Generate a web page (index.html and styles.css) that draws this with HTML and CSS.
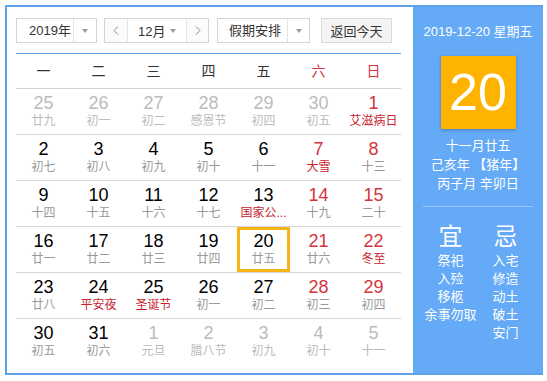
FILE: index.html
```html
<!DOCTYPE html>
<html lang="zh-CN">

<head>
    <meta charset="UTF-8">
    <meta name="viewport" content="width=device-width, initial-scale=1.0">
    <title>万年历</title>
    <link rel="stylesheet" href="styles.css">
</head>

<body>
    <div class="calendar">
        <div class="main">
            <div class="toolbar">
                <div class="select year">
                    <span class="value">2019年</span>
                    <span class="caret-box"><i class="caret"></i></span>
                </div>
                <div class="month-picker">
                    <button class="nav prev">
                        <svg width="6" height="9" viewBox="0 0 6 9"><path d="M5 0.5 L1 4.5 L5 8.5" fill="none" stroke="#888" stroke-width="1"/></svg>
                    </button>
                    <div class="month">
                        <span>12月</span>
                        <i class="caret"></i>
                    </div>
                    <button class="nav next">
                        <svg width="6" height="9" viewBox="0 0 6 9"><path d="M1 0.5 L5 4.5 L1 8.5" fill="none" stroke="#888" stroke-width="1"/></svg>
                    </button>
                </div>
                <div class="select holiday">
                    <span class="value">假期安排</span>
                    <span class="caret-box"><i class="caret"></i></span>
                </div>
                <button class="today-btn">返回今天</button>
            </div>

            <div class="weekdays">
                <div>一</div>
                <div>二</div>
                <div>三</div>
                <div>四</div>
                <div>五</div>
                <div class="weekend">六</div>
                <div class="weekend">日</div>
            </div>

            <div class="weeks">
                <div class="week">
                    <div class="day other"><span class="num">25</span><span class="lunar">廿九</span></div>
                    <div class="day other"><span class="num">26</span><span class="lunar">初一</span></div>
                    <div class="day other"><span class="num">27</span><span class="lunar">初二</span></div>
                    <div class="day other"><span class="num">28</span><span class="lunar">感恩节</span></div>
                    <div class="day other"><span class="num">29</span><span class="lunar">初四</span></div>
                    <div class="day other"><span class="num">30</span><span class="lunar">初五</span></div>
                    <div class="day weekend"><span class="num">1</span><span class="lunar fest">艾滋病日</span></div>
                </div>
                <div class="week">
                    <div class="day"><span class="num">2</span><span class="lunar">初七</span></div>
                    <div class="day"><span class="num">3</span><span class="lunar">初八</span></div>
                    <div class="day"><span class="num">4</span><span class="lunar">初九</span></div>
                    <div class="day"><span class="num">5</span><span class="lunar">初十</span></div>
                    <div class="day"><span class="num">6</span><span class="lunar">十一</span></div>
                    <div class="day weekend"><span class="num">7</span><span class="lunar fest">大雪</span></div>
                    <div class="day weekend"><span class="num">8</span><span class="lunar">十三</span></div>
                </div>
                <div class="week">
                    <div class="day"><span class="num">9</span><span class="lunar">十四</span></div>
                    <div class="day"><span class="num">10</span><span class="lunar">十五</span></div>
                    <div class="day"><span class="num">11</span><span class="lunar">十六</span></div>
                    <div class="day"><span class="num">12</span><span class="lunar">十七</span></div>
                    <div class="day"><span class="num">13</span><span class="lunar fest">国家公...</span></div>
                    <div class="day weekend"><span class="num">14</span><span class="lunar">十九</span></div>
                    <div class="day weekend"><span class="num">15</span><span class="lunar">二十</span></div>
                </div>
                <div class="week">
                    <div class="day"><span class="num">16</span><span class="lunar">廿一</span></div>
                    <div class="day"><span class="num">17</span><span class="lunar">廿二</span></div>
                    <div class="day"><span class="num">18</span><span class="lunar">廿三</span></div>
                    <div class="day"><span class="num">19</span><span class="lunar">廿四</span></div>
                    <div class="day today"><span class="num">20</span><span class="lunar">廿五</span></div>
                    <div class="day weekend"><span class="num">21</span><span class="lunar">廿六</span></div>
                    <div class="day weekend"><span class="num">22</span><span class="lunar fest">冬至</span></div>
                </div>
                <div class="week">
                    <div class="day"><span class="num">23</span><span class="lunar">廿八</span></div>
                    <div class="day"><span class="num">24</span><span class="lunar fest">平安夜</span></div>
                    <div class="day"><span class="num">25</span><span class="lunar fest">圣诞节</span></div>
                    <div class="day"><span class="num">26</span><span class="lunar">初一</span></div>
                    <div class="day"><span class="num">27</span><span class="lunar">初二</span></div>
                    <div class="day weekend"><span class="num">28</span><span class="lunar">初三</span></div>
                    <div class="day weekend"><span class="num">29</span><span class="lunar">初四</span></div>
                </div>
                <div class="week">
                    <div class="day"><span class="num">30</span><span class="lunar">初五</span></div>
                    <div class="day"><span class="num">31</span><span class="lunar">初六</span></div>
                    <div class="day other"><span class="num">1</span><span class="lunar">元旦</span></div>
                    <div class="day other"><span class="num">2</span><span class="lunar">腊八节</span></div>
                    <div class="day other"><span class="num">3</span><span class="lunar">初九</span></div>
                    <div class="day other"><span class="num">4</span><span class="lunar">初十</span></div>
                    <div class="day other"><span class="num">5</span><span class="lunar">十一</span></div>
                </div>
            </div>
        </div>

        <aside class="info">
            <div class="info-date">2019-12-20 星期五</div>
            <div class="big-day">20</div>
            <div class="lunar-info">
                <div>十一月廿五</div>
                <div>己亥年 【猪年】</div>
                <div>丙子月 辛卯日</div>
            </div>
            <div class="divider"></div>
            <div class="almanac">
                <div class="col">
                    <h3>宜</h3>
                    <ul>
                        <li>祭祀</li>
                        <li>入殓</li>
                        <li>移柩</li>
                        <li>余事勿取</li>
                    </ul>
                </div>
                <div class="col">
                    <h3>忌</h3>
                    <ul>
                        <li>入宅</li>
                        <li>修造</li>
                        <li>动土</li>
                        <li>破土</li>
                        <li>安门</li>
                    </ul>
                </div>
            </div>
        </aside>
    </div>
</body>

</html>
```

FILE: styles.css
```css
* {
    box-sizing: border-box;
    margin: 0;
    padding: 0;
}

body {
    font-family: "Liberation Sans", "Noto Sans CJK SC", sans-serif;
    color: #333;
    background: #fff;
}

.calendar {
    display: flex;
    width: 538px;
    height: 370px;
    margin: 5px 0 0 5px;
    border: 2px solid #5ca3ec;
}

.main {
    width: 406px;
    padding: 11px 12px 0 9px;
    background: #fff;
}

/* toolbar */
.toolbar {
    display: flex;
    align-items: center;
    height: 25px;
    font-size: 13px;
}

.select {
    display: flex;
    height: 25px;
    border: 1px solid #d4d4d4;
    background: #fff;
}

.select .value {
    padding-left: 12px;
    line-height: 23px;
}

.year {
    width: 81px;
}

.year .value {
    width: 56px;
}

.holiday {
    width: 93px;
    margin-left: 8px;
}

.holiday .value {
    width: 69px;
    padding-left: 11px;
}

.caret-box {
    flex: 1;
    display: flex;
    align-items: center;
    justify-content: center;
    border-left: 1px solid #e4e4e4;
}

.caret {
    display: inline-block;
    width: 0;
    height: 0;
    border-top: 4px solid #9a9a9a;
    border-left: 3.5px solid transparent;
    border-right: 3.5px solid transparent;
}

.month-picker {
    display: flex;
    width: 105px;
    height: 25px;
    margin-left: 7px;
    border: 1px solid #d4d4d4;
}

.nav {
    display: flex;
    align-items: center;
    justify-content: center;
    width: 23px;
    border: none;
    background: #fbfbfb;
}

.prev {
    border-right: 1px solid #e4e4e4;
}

.next {
    width: 21px;
}

.month {
    display: flex;
    align-items: center;
    width: 59px;
    padding-left: 10px;
    border-right: 1px solid #e4e4e4;
}

.month .caret {
    margin-left: 5px;
}

.today-btn {
    width: 71px;
    height: 25px;
    margin-left: 11px;
    border: 1px solid #dadada;
    background: #f4f4f4;
    color: #333;
    font-family: inherit;
    font-size: 13px;
}

/* grid */
.weekdays {
    display: grid;
    grid-template-columns: repeat(7, 55px);
    margin-top: 10px;
    border-top: 1px solid #5ca3ec;
    border-bottom: 1px solid #d2d2d2;
    line-height: 34px;
    font-size: 14px;
    text-align: center;
    color: #333;
}

.weekdays .weekend {
    color: #d4343e;
}

.week {
    display: grid;
    grid-template-columns: repeat(7, 55px);
    height: 46px;
    border-bottom: 1px solid #d6d6d6;
}

.week:last-child {
    border-bottom: none;
}

.day {
    display: flex;
    flex-direction: column;
    align-items: center;
    padding-top: 4px;
}

.num {
    font-size: 18px;
    line-height: 20px;
    color: #000;
}

.lunar {
    font-size: 12px;
    line-height: 16px;
    color: #999;
    white-space: nowrap;
}

.day.weekend .num {
    color: #d4343e;
}

.lunar.fest {
    color: #c8232f;
}

.day.other .num,
.day.other .lunar {
    color: #bbb;
}

.day.today {
    margin: 0 1px;
    box-shadow: inset 0 0 0 3px #f7b418;
}

/* side panel */
.info {
    width: 130px;
    padding: 15px 10px 0;
    background: #64aaf6;
    color: #fff;
    text-align: center;
}

.info-date {
    font-size: 13px;
    line-height: 20px;
}

.big-day {
    width: 75px;
    height: 73px;
    margin: 14px auto 0;
    background: #fdb300;
    font-size: 52px;
    line-height: 73px;
    box-shadow: 0 1px 3px rgba(0, 0, 0, 0.25);
}

.lunar-info {
    margin-top: 7px;
    font-size: 13px;
    line-height: 19px;
}

.divider {
    margin-top: 13px;
    border-top: 1px solid rgba(255, 255, 255, 0.35);
}

.almanac {
    display: grid;
    grid-template-columns: 55px 55px;
    margin-top: 15px;
}

.col h3 {
    font-size: 24px;
    font-weight: normal;
    line-height: 30px;
}

.col ul {
    list-style: none;
    font-size: 13px;
    line-height: 18px;
}
```
